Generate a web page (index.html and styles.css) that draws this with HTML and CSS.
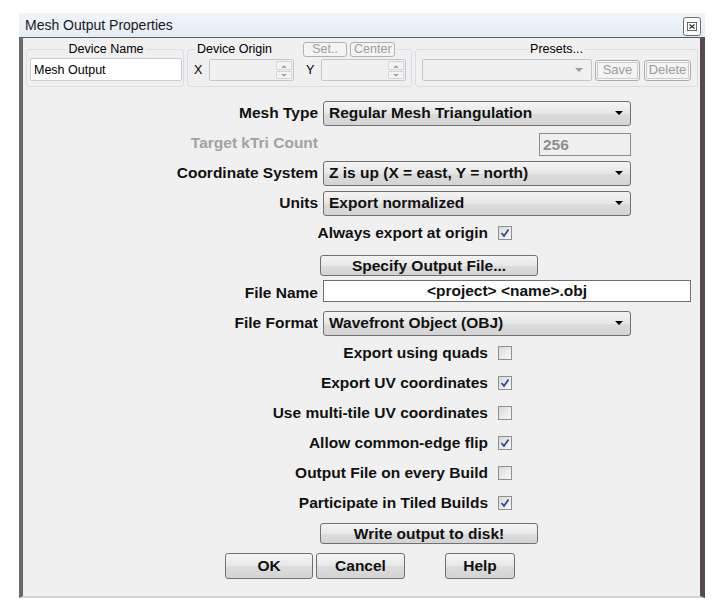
FILE: index.html
```html
<!DOCTYPE html>
<html lang="en">
  <head>
    <meta charset="UTF-8" />
    <meta name="viewport" content="width=device-width, initial-scale=1.0" />
    <title>Mesh Output Properties</title>
    <link rel="stylesheet" href="styles.css">
  </head>
  <body>
    <div class="window">
      <div class="titlebar">
        <span class="title">Mesh Output Properties</span>
        <svg class="close" width="18" height="19" viewBox="0 0 18 19">
          <rect x="0.5" y="0.5" width="17" height="18" rx="2" fill="#fafbfc" stroke="#6e6e6e" />
          <rect x="4.5" y="5.5" width="9" height="8" fill="none" stroke="#666" stroke-width="1" />
          <path d="M6.5 7.5 L11.5 11.5 M11.5 7.5 L6.5 11.5" stroke="#333" stroke-width="1.3" />
        </svg>
      </div>

      <div class="client">
        <div class="groups">
          <fieldset class="group group-name">
            <legend class="centered">Device Name</legend>
            <input class="edit" type="text" value="Mesh Output" />
          </fieldset>

          <fieldset class="group group-origin">
            <legend class="origin-legend">
              <span>Device Origin</span>
              <span class="small-button set-button">Set..</span>
              <span class="small-button">Center</span>
            </legend>
            <div class="origin-row">
              <span class="axis">X</span>
              <div class="spin-edit">
                <div class="spin">
                  <span class="spin-up"></span>
                  <span class="spin-down"></span>
                </div>
              </div>
              <span class="axis axis-y">Y</span>
              <div class="spin-edit">
                <div class="spin">
                  <span class="spin-up"></span>
                  <span class="spin-down"></span>
                </div>
              </div>
            </div>
          </fieldset>

          <fieldset class="group group-presets">
            <legend class="centered">Presets...</legend>
            <div class="presets-row">
              <div class="preset-combo"><span class="arrow gray"></span></div>
              <span class="small-button double">Save</span>
              <span class="small-button double">Delete</span>
            </div>
          </fieldset>
        </div>

        <div class="form">
          <div class="row">
            <span class="label">Mesh Type</span>
            <div class="combo">Regular Mesh Triangulation<span class="arrow"></span></div>
          </div>
          <div class="row">
            <span class="label disabled">Target kTri Count</span>
            <div class="combo-space">
              <div class="number">256</div>
            </div>
          </div>
          <div class="row">
            <span class="label">Coordinate System</span>
            <div class="combo">Z is up (X = east, Y = north)<span class="arrow"></span></div>
          </div>
          <div class="row">
            <span class="label">Units</span>
            <div class="combo">Export normalized<span class="arrow"></span></div>
          </div>
          <div class="row check-row">
            <span class="label">Always export at origin</span>
            <span class="checkbox"><svg width="12" height="12" viewBox="0 0 12 12"><path d="M2.5 6 L5 9 L9.5 2.5" /></svg></span>
          </div>
          <div class="row button-row">
            <span class="button wide push-down">Specify Output File...</span>
          </div>
          <div class="row">
            <span class="label">File Name</span>
            <div class="file-name">&lt;project&gt; &lt;name&gt;.obj</div>
          </div>
          <div class="row">
            <span class="label">File Format</span>
            <div class="combo">Wavefront Object (OBJ)<span class="arrow"></span></div>
          </div>
          <div class="row check-row">
            <span class="label">Export using quads</span>
            <span class="checkbox"></span>
          </div>
          <div class="row check-row">
            <span class="label">Export UV coordinates</span>
            <span class="checkbox"><svg width="12" height="12" viewBox="0 0 12 12"><path d="M2.5 6 L5 9 L9.5 2.5" /></svg></span>
          </div>
          <div class="row check-row">
            <span class="label">Use multi-tile UV coordinates</span>
            <span class="checkbox"></span>
          </div>
          <div class="row check-row">
            <span class="label">Allow common-edge flip</span>
            <span class="checkbox"><svg width="12" height="12" viewBox="0 0 12 12"><path d="M2.5 6 L5 9 L9.5 2.5" /></svg></span>
          </div>
          <div class="row check-row">
            <span class="label">Output File on every Build</span>
            <span class="checkbox"></span>
          </div>
          <div class="row check-row">
            <span class="label">Participate in Tiled Builds</span>
            <span class="checkbox"><svg width="12" height="12" viewBox="0 0 12 12"><path d="M2.5 6 L5 9 L9.5 2.5" /></svg></span>
          </div>
          <div class="row button-row">
            <span class="button wide">Write output to disk!</span>
          </div>
          <div class="row dialog-buttons">
            <span class="button ok">OK</span>
            <span class="button cancel">Cancel</span>
            <span class="button help">Help</span>
          </div>
        </div>
      </div>
    </div>
  </body>
</html>
```

FILE: styles.css
```css
body {
  margin: 0;
  background-color: #ffffff;
  font-family: "Liberation Sans", Arial, sans-serif;
}

.window {
  width: 686px;
  margin: 13px 0 0 19px;
}

.titlebar {
  height: 24px;
  box-sizing: border-box;
  display: flex;
  align-items: center;
  justify-content: space-between;
  padding: 0 4px 0 6px;
  background: linear-gradient(to bottom, #f1f5fa, #e4ecf5);
}

.title {
  font-size: 14px;
  color: #1a1a1a;
}

.close {
  display: block;
  margin-top: 3px;
}

.client {
  height: 561px;
  box-sizing: border-box;
  background-color: #f0f0f0;
  border-top: 1px solid #5c5c5c;
  border-left: 4px solid #6a6a6a;
  border-right: 5px solid #574b51;
  border-bottom: 2px solid #d2d2d2;
}

/* top group boxes */

.groups {
  display: flex;
  gap: 3px;
  padding: 4px 0 0 3px;
}

.group {
  margin: 0;
  height: 45px;
  box-sizing: border-box;
  border: 1px solid #d5dfe5;
  border-radius: 3px;
  padding: 0 1px 0 3px;
  font-size: 12.5px;
  color: #000;
}

.group legend {
  line-height: 15px;
  padding: 0 2px;
}

.group legend.centered {
  margin: 0 auto;
}

.group-name {
  width: 157px;
}

.group-origin {
  width: 225px;
  padding-left: 7px;
}

.group-presets {
  width: 283px;
  padding: 0 2px;
}

.edit {
  display: block;
  box-sizing: border-box;
  width: 152px;
  height: 23px;
  margin: 1px 0 0 0;
  padding: 0 3px;
  border: 1px solid #c8cdd2;
  border-radius: 2px;
  background-color: #ffffff;
  font-family: "Liberation Sans", Arial, sans-serif;
  font-size: 12.5px;
  color: #000;
}

.origin-legend {
  display: flex;
  align-items: center;
  height: 15px;
}

.small-button {
  box-sizing: border-box;
  display: inline-block;
  height: 15px;
  padding: 0 3px;
  border: 1px solid #aeb3b7;
  border-radius: 3px;
  background-color: #f4f4f4;
  color: #9c9c9c;
  font-size: 12.5px;
  line-height: 13px;
  text-align: center;
}

.set-button {
  width: 44px;
  margin: 0 3px 0 31px;
}

.origin-legend .small-button:last-child {
  width: 45px;
}

.origin-row {
  display: flex;
  align-items: center;
  margin-top: 2px;
}

.axis {
  width: 8px;
  margin-left: -1px;
  margin-right: 7px;
}

.axis-y {
  margin-left: 12px;
}

.spin-edit {
  box-sizing: border-box;
  width: 85px;
  height: 22px;
  border: 1px solid #c3c7cb;
  border-radius: 2px;
  background-color: #f0f0f0;
  display: flex;
  justify-content: flex-end;
  padding: 1px;
}

.spin {
  width: 16px;
  display: flex;
  flex-direction: column;
  gap: 1px;
}

.spin-up,
.spin-down {
  flex: 1;
  border: 1px solid #d4d7da;
  border-radius: 1px;
  background-color: #f3f3f3;
  position: relative;
}

.spin-up::after,
.spin-down::after {
  content: "";
  position: absolute;
  left: 4px;
  top: 3px;
  border-left: 3px solid transparent;
  border-right: 3px solid transparent;
}

.spin-up::after {
  border-bottom: 3px solid #a8a8a8;
}

.spin-down::after {
  top: 2px;
  border-top: 3px solid #a8a8a8;
}

.presets-row {
  display: flex;
  align-items: center;
  margin: 2px 0 0 4px;
}

.preset-combo {
  box-sizing: border-box;
  width: 170px;
  height: 22px;
  border: 1px solid #c3c7cb;
  border-radius: 2px;
  background-color: #f0f0f0;
  display: flex;
  align-items: center;
  justify-content: flex-end;
  padding-right: 8px;
}

.small-button.double {
  height: 21px;
  line-height: 17px;
  border-color: #a9adb0;
  box-shadow: inset 0 0 0 1px #f8f8f8, inset 0 0 0 2px #c9cccf;
  font-size: 13px;
}

.presets-row .small-button.double:first-of-type {
  width: 45px;
  margin-left: 3px;
}

.presets-row .small-button.double:last-of-type {
  width: 47px;
  margin-left: 4px;
}

/* main form */

.form {
  margin-top: 11px;
}

.row {
  display: flex;
  align-items: center;
  height: 30px;
}

.label {
  width: 295px;
  margin-right: 5px;
  text-align: right;
  font-weight: bold;
  font-size: 15.5px;
  color: #111;
  white-space: nowrap;
}

.label.disabled {
  color: #a2a2a2;
}

.check-row .label {
  width: 465px;
  margin-right: 10px;
}

.combo {
  box-sizing: border-box;
  width: 308px;
  height: 25px;
  display: flex;
  align-items: center;
  justify-content: space-between;
  padding: 0 7px 0 5px;
  border: 1px solid #707070;
  border-radius: 3px;
  background: linear-gradient(to bottom, #f4f4f4, #e6e6e6 50%, #dcdcdc 51%, #d4d4d4);
  font-weight: bold;
  font-size: 15.5px;
  color: #111;
}

.arrow {
  width: 0;
  height: 0;
  border-left: 4px solid transparent;
  border-right: 4px solid transparent;
  border-top: 4px solid #000;
}

.arrow.gray {
  border-top-color: #9a9a9a;
}

.combo-space {
  width: 308px;
  display: flex;
  justify-content: flex-end;
}

.number {
  box-sizing: border-box;
  width: 92px;
  height: 23px;
  margin-top: 3px;
  padding: 0 3px;
  border: 1px solid #8c8c8c;
  background-color: #f0f0f0;
  color: #8e8e8e;
  font-weight: bold;
  font-size: 15.5px;
  line-height: 21px;
}

.checkbox {
  box-sizing: border-box;
  width: 14px;
  height: 14px;
  border: 1px solid #8e8f8f;
  background: linear-gradient(135deg, #d8d8d8, #fbfbfb);
  display: flex;
}

.checkbox path {
  fill: none;
  stroke: #34489a;
  stroke-width: 1.8;
}

.file-name {
  box-sizing: border-box;
  width: 368px;
  height: 22px;
  margin-bottom: 5px;
  border: 1px solid #707070;
  background-color: #ffffff;
  text-align: center;
  font-weight: bold;
  font-size: 15.5px;
  line-height: 20px;
  color: #111;
}

.button-row {
  padding-left: 297px;
}

.button {
  box-sizing: border-box;
  display: inline-block;
  height: 21px;
  border: 1px solid #707070;
  border-radius: 3px;
  background: linear-gradient(to bottom, #f4f4f4, #e8e8e8 50%, #dddddd 51%, #d3d3d3);
  font-weight: bold;
  font-size: 15.5px;
  line-height: 19px;
  text-align: center;
  color: #111;
}

.button.wide {
  width: 218px;
}

.push-down {
  margin-top: 4px;
}

.dialog-buttons {
  height: 36px;
  padding-left: 202px;
}

.dialog-buttons .button {
  height: 26px;
  line-height: 24px;
}

.ok {
  width: 88px;
}

.cancel {
  width: 89px;
  margin-left: 3px;
}

.help {
  width: 70px;
  margin-left: 40px;
}
```
